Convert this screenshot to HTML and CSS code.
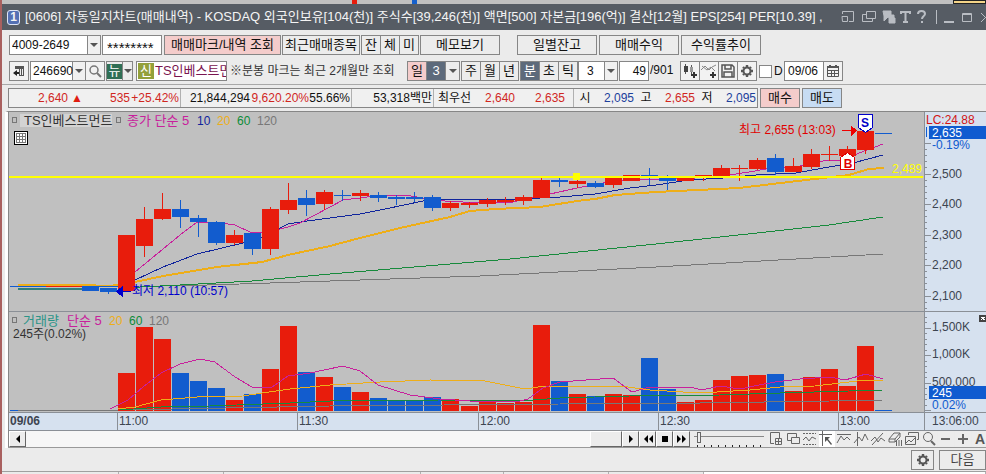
FILE: index.html
```html
<!DOCTYPE html>
<html lang="ko">

<head>
    <meta charset="UTF-8">
    <meta name="viewport" content="width=device-width, initial-scale=1.0">
    <link rel="stylesheet" href="styles.css">
    <title>[0606] 자동일지차트</title>
</head>

<body>
    <div class="desktop-strip"><i class="mark red"></i><i class="mark blue"></i><i class="mark tab"></i></div>

    <main class="window">
        <header class="titlebar">
            <span class="badge">1</span>
            <h1>[0606] 자동일지차트(매매내역) - KOSDAQ 외국인보유[104(천)] 주식수[39,246(천)] 액면[500] 자본금[196(억)] 결산[12월] EPS[254] PER[10.39] ,</h1>
            <svg class="title-icons" width="146" height="18" viewBox="0 0 146 18" fill="none" stroke="#b9bdc3" stroke-width="1">
                <path d="M2.5 6V3.500h11v10H9M2 8.500h5.500v5H2.500z" />
                <path d="M26.500 3.500h9v7h-9zM26 6.500h-3.500v7h10v-3" />
                <path d="M43 3h8v8l-3-2-4 4v-5zM49 10h6v5h-6zM50 10V7h4v3" fill="#b9bdc3" />
                <path d="M61 6V4h9v2M65.500 4v10M63 14h5" stroke-width="2" />
                <path d="M78 6c0-4 7-4 7 0 0 2-3 2-3 5M82 13v2" stroke-width="2" />
                <path d="M96.500 2v14" />
                <path d="M104 14h10" stroke-width="2" />
                <path d="M122.500 5.500h9v8h-9zM122 6.500h10" />
                <path d="M141 5l9 9M150 5l-9 9" />
            </svg>
        </header>

        <section class="toolbar">
            <div class="row">
                <span class="combo account"><select aria-label="계좌번호"><option>4009-2649</option></select></span>
                <input class="box password" type="text" value="********" aria-label="비밀번호">
                <button class="pink w-query">매매마크/내역 조회</button>
                <button class="w-recent">최근매매종목</button>
                <span class="group"><button>잔</button><button>체</button><button>미</button></span>
                <button class="w-tab">메모보기</button>
                <button class="w-tab apart">일별잔고</button>
                <button class="w-tab">매매수익</button>
                <button class="w-tab">수익률추이</button>
            </div>

            <div class="row">
                <button class="icon" aria-label="목록"><svg width="14" height="14" viewBox="0 0 14 14"><path d="M3 2h9v10H7V5H3z" fill="#555" /><path d="M8 5h1v6H8zM10 5h1v6h-1z" fill="#eee" /><path d="M1 9l4-3v2h2v2H5v2z" fill="#222" /></svg></button>
                <span class="group">
                    <span class="combo code"><select aria-label="종목코드"><option>246690</option></select></span><button class="icon" aria-label="검색"><svg width="14" height="14" viewBox="0 0 14 14" fill="none" stroke="#777"><circle cx="6" cy="6" r="4" stroke-width="1.5" /><path d="M9 9l4 4" stroke-width="2" /></svg></button>
                </span>
                <span class="group news"><button><b>뉴</b></button><button class="drop" aria-label="뉴스 메뉴"></button></span>
                <span class="box stock"><b>신</b><span>TS인베스트먼트</span></span>
                <span class="note">※분봉 마크는 최근 2개월만 조회</span>
                <span class="group"><button class="pink">일</button><button class="dark">3</button><button class="drop" aria-label="일 간격"></button></span>
                <span class="group"><button>주</button><button>월</button><button>년</button></span>
                <span class="group"><button class="dark">분</button><button>초</button><button>틱</button><span class="combo tick"><select aria-label="간격"><option>3</option></select></span></span>
                <label class="count"><input class="box" type="text" value="49">/901</label>
                <span class="group">
                    <button class="icon" aria-label="봉 추가"><svg width="16" height="16" viewBox="0 0 16 16"><path d="M3.500 1v10M9.500 2v9" stroke="#555" /><path d="M2 3h4v6H2z" fill="#444" /><path d="M8 4h3v5H8z" fill="#999" /><path d="M9 12h6M12 9v6" stroke="#333" stroke-width="2" /></svg></button><button class="icon" aria-label="지표 추가"><svg width="16" height="16" viewBox="0 0 16 16" fill="none"><path d="M0 7l4-4 4 4 3-3 4-2M1 3l5 4 4-3 4 4" stroke="#888" /><path d="M9 12h6M12 9v6" stroke="#333" stroke-width="2" /></svg></button><button class="icon" aria-label="저장"><svg width="16" height="16" viewBox="0 0 16 16" fill="none" stroke="#555" stroke-width="1.5"><path d="M2 2h10l2 2v10H2zM5 2v4h6V2M4 14V9h8v5" /></svg></button><button class="icon" aria-label="설정"><svg width="14" height="14" viewBox="0 0 14 14" fill="none" stroke="#555"><circle cx="7" cy="7" r="3.500" stroke-width="2" /><path d="M7 1v2M7 11v2M1 7h2M11 7h2M3 3l1 1M10 10l1 1M11 3l-1 1M3 11l1-1" stroke-width="2.4" /></svg></button>
                </span>
                <label class="check"><input type="checkbox">D</label>
                <span class="group"><input class="box date" type="text" value="09/06" aria-label="날짜"><button class="icon" aria-label="달력"><svg width="14" height="14" viewBox="0 0 14 14" fill="none" stroke="#555"><path d="M1.500 3.500h11v9h-11zM1 6.500h12M1 9.500h12M5.500 6v6M8.500 6v6" /><path d="M1 3h12M4 1v3M10 1v3" stroke-width="2" /></svg></button></span>
            </div>
        </section>

        <section class="quote">
            <table>
                <tr>
                    <td class="c-price up">2,640</td>
                    <td class="c-arrow up">▲</td>
                    <td class="c-diff up">535</td>
                    <td class="c-rate up line">+25.42%</td>
                    <td class="c-volume">21,844,294</td>
                    <td class="c-ratio up">9,620.20%</td>
                    <td class="c-turn line">55.66%</td>
                    <td class="c-amount line">53,318백만</td>
                    <th class="c-best">최우선</th>
                    <td class="c-ask up">2,640</td>
                    <td class="c-bid up line">2,635</td>
                    <th>시</th>
                    <td class="c-ohl down">2,095</td>
                    <th>고</th>
                    <td class="c-ohl up">2,655</td>
                    <th>저</th>
                    <td class="c-ohl down">2,095</td>
                </tr>
            </table>
            <button class="pink">매수</button>
            <button class="sky">매도</button>
        </section>

        <section class="chart">
            <svg id="chart" viewBox="9 112 977 319">
                <rect class="plot" x="9" y="112" width="915" height="300" />
                <rect class="axis" x="924" y="112" width="62" height="319" />
                <rect class="axis" x="9" y="412" width="977" height="19" />
                <g id="volume"></g>
                <g id="volume-lines"></g>
                <g id="price-lines"></g>
                <g id="candles"></g>
                <path class="avg-price" d="M9 177H923" />
                <rect x="573" y="173" width="7" height="7" fill="#ff0" />
                <g id="scale"></g>
                <path class="rule" d="M9 311.500H986M9 412.500H986M924.500 112V430M117.500 412V430M297.500 412V430M478.500 412V430M658.500 412V430M838.500 412V430M9 430.500H986" />

                <g class="legend">
                    <rect class="dot" x="12.500" y="117.500" width="4" height="5" />
                    <rect x="20" y="114" width="92" height="13" fill="#d3d3d3" />
                    <text x="24" y="125" fill="#333">TS인베스트먼트</text>
                    <rect class="dot" x="116.500" y="117.500" width="4" height="5" />
                    <text x="127" y="125" fill="#c8209c">종가 단순 5</text>
                    <rect class="dot" x="12.500" y="317.500" width="4" height="5" />
                    <text x="23" y="325" fill="#2a9488">거래량</text>
                    <text x="67" y="325" fill="#c8209c">단순 5</text>
                </g>
                <g class="label">
                    <text x="197" y="125" fill="#10249c">10</text>
                    <text x="217" y="125" fill="#eeae18">20</text>
                    <text x="237" y="125" fill="#0c8c38">60</text>
                    <text x="257" y="125" fill="#777">120</text>
                    <text x="109" y="325" fill="#eeae18">20</text>
                    <text x="129" y="325" fill="#0c8c38">60</text>
                    <text x="149" y="325" fill="#777">120</text>
                    <text x="13" y="338" fill="#333">245주(0.02%)</text>
                </g>
                <rect x="14.500" y="131.500" width="13" height="13" fill="#fff" stroke="#000" />
                <path d="M16.500 133.500h9v9h-9zM19.500 133v10M22.500 133v10M16 136.500h10M16 139.500h10" fill="none" stroke="#777" />

                <g class="label">
                    <path d="M116 291.500l7-6v12z" fill="#00c" />
                    <path d="M122 291.500h9" stroke="#00c" />
                    <text x="132" y="295" fill="#00c">최저 2,110 (10:57)</text>
                    <text x="739" y="134" fill="#e00000">최고 2,655 (13:03)</text>
                    <path d="M842 130.500h10" stroke="#e00" />
                    <path d="M857 130.500l-6-5v11z" fill="#e00" />
                    <path d="M858.500 114.500h14v13l-7 5-7-5z" fill="#fff" stroke="#0000c8" />
                    <text class="flag" x="865" y="127" fill="#0000c8">S</text>
                    <path d="M840.500 169.500h14v-12l-7-5-7 5z" fill="#fff" stroke="#e00000" />
                    <text class="flag" x="848" y="168" fill="#e00000">B</text>
                    <text x="892" y="173" fill="#ff0">2,489</text>
                </g>

                <g class="label num">
                    <text x="926" y="124" fill="#d21414">LC:24.88</text>
                    <path d="M926.500 127v10" stroke="#0f5cd0" />
                    <rect x="929" y="126" width="57" height="13" fill="#0f5bd0" />
                    <text x="932" y="137" fill="#fff">2,635</text>
                    <text x="932" y="149" fill="#0f5bd0">-0.19%</text>
                    <text x="932" y="178">2,500</text>
                    <text x="932" y="208">2,400</text>
                    <text x="932" y="239">2,300</text>
                    <text x="932" y="269">2,200</text>
                    <text x="932" y="300">2,100</text>
                    <text x="932" y="331">1,500K</text>
                    <text x="932" y="358">1,000K</text>
                    <text x="932" y="386">500,000</text>
                    <rect x="929" y="386" width="57" height="13" fill="#0f5bd0" />
                    <text x="932" y="397" fill="#fff">245</text>
                    <text x="932" y="409" fill="#0f5bd0">0.02%</text>
                    <text x="10" y="425" class="day">09/06</text>
                    <text x="119" y="425">11:00</text>
                    <text x="299" y="425">11:30</text>
                    <text x="480" y="425">12:00</text>
                    <text x="660" y="425">12:30</text>
                    <text x="840" y="425">13:00</text>
                    <text x="932" y="425">13:06:00</text>
                </g>
                <rect x="979" y="315" width="8" height="7" fill="#444" />
                <path d="M981 317l4 3M985 317l-4 3" stroke="#fff" />
            </svg>

            <div class="scroll">
                <button aria-label="왼쪽"><svg width="8" height="8" viewBox="0 0 8 8"><path d="M6 0v8L2 4z" /></svg></button>
                <div class="track"><button class="thumb" aria-label="스크롤"></button></div>
                <button aria-label="오른쪽"><svg width="8" height="8" viewBox="0 0 8 8"><path d="M2 0v8l4-4z" /></svg></button>
                <button aria-label="처음"><svg width="10" height="8" viewBox="0 0 10 8"><path d="M5 0v8L1 4zM10 0v8L6 4z" /></svg></button>
                <button aria-label="정지"><svg width="8" height="8" viewBox="0 0 8 8"><path d="M1 1h6v6H1z" /></svg></button>
                <button aria-label="끝"><svg width="10" height="8" viewBox="0 0 10 8"><path d="M0 0v8l4-4zM5 0v8l4-4z" /></svg></button>
                <div class="speed"><input type="range" min="0" max="100" value="4" aria-label="속도"></div>
                <div class="tools">
                    <button aria-label="창 추가"><svg viewBox="0 0 16 16"><path d="M6 12.500H2.500v-11h9V7M7.500 7.500h6v6h-6zM10.500 7v7M7 10.500h7" /></svg></button>
                    <button aria-label="창 겹치기"><svg viewBox="0 0 16 16"><path d="M11.500 6V2.500h-9v7H6M6.500 6.500h8v6h-8z" /></svg></button>
                    <button aria-label="영역"><svg viewBox="0 0 16 16"><path d="M1 2.500h13M1 13.500h13" stroke-dasharray="2 1" /><path d="M1 9l3-3 3 4 3-4 4 2" /></svg></button>
                    <button class="on" aria-label="십자선"><svg viewBox="0 0 16 16"><path d="M0 3.500h13M3.500 0v15" /><path d="M6 6h5l-2 2 4 5-1 1-4-5-2 2z" fill="#555" stroke="none" /></svg></button>
                    <button aria-label="수평선"><svg viewBox="0 0 16 16"><path d="M1 3.500h14M1 12l4-7 3 4 3-3 3 3" /></svg></button>
                    <button aria-label="수직선"><svg viewBox="0 0 16 16"><path d="M4.500 1v14M1 12l5-6 3 4 3-7 3 6" /></svg></button>
                    <button aria-label="추세선"><svg viewBox="0 0 16 16"><path d="M2 14L13 2M1 10l4-4 3 5 3-4 4 3" /></svg></button>
                    <button aria-label="지우개"><svg viewBox="0 0 16 16"><path d="M2 8l5-6h6l-5 6zM2 8v3h6V8M8 11l5-5V2M9.500 9v6M12 9v6M14.500 9v6" /></svg></button>
                    <button aria-label="차트 복사"><svg viewBox="0 0 16 16"><path d="M4.500 4V1.500h10v7H13M1.500 5.500h10v8h-10zM2 12l3-3 2 2 4-4" /></svg></button>
                    <button aria-label="확대경"><svg viewBox="0 0 16 16"><circle cx="7" cy="6" r="4.500" /><path d="M10 10l4 4" stroke-width="2" /></svg></button>
                    <button aria-label="축소"><svg viewBox="0 0 16 16"><path d="M3 8h9" stroke-width="2" /></svg></button>
                    <button aria-label="확대"><svg viewBox="0 0 16 16"><path d="M3 8h10M8 3v10" stroke-width="2" /></svg></button>
                    <button aria-label="자동">A</button>
                </div>
            </div>
        </section>

        <footer class="footer">
            <button class="gear" aria-label="환경설정"><svg width="14" height="14" viewBox="0 0 14 14" fill="none" stroke="#555"><circle cx="7" cy="7" r="3.500" stroke-width="2" /><path d="M7 1v2M7 11v2M1 7h2M11 7h2M3 3l1 1M10 10l1 1M11 3l-1 1M3 11l1-1" stroke-width="2.4" /></svg></button>
            <button class="next">다음</button>
        </footer>
        <div class="tabs"><i></i><i></i><i></i><i></i><i></i><i></i><i class="blank"></i></div>
    </main>

    <script src="script.js"></script>
</body>

</html>
```
FILE: styles.css
```css
* {
    box-sizing: border-box;
}

body {
    margin: 0;
    height: 100vh;
    overflow: hidden;
    display: flex;
    flex-direction: column;
    background-color: #ebebeb;
    border-left: 2px solid #a9605f;
    font-family: "Liberation Sans", "Noto Sans CJK KR", sans-serif;
    font-size: 13px;
    line-height: 18px;
    color: #111;
}

button,
input,
select {
    font: inherit;
    color: inherit;
    margin: 0;
    padding: 0;
    border: 1px solid #868686;
    border-radius: 0;
    background-color: #ececec;
    height: 20px;
    line-height: 18px;
    white-space: nowrap;
}

button {
    display: inline-flex;
    align-items: center;
    justify-content: center;
    flex: none;
}

.desktop-strip {
    flex: none;
    display: flex;
    height: 4px;
    background-color: #c0c0c0;
}

.mark {
    width: 5px;
}

.mark.red {
    margin-left: 350px;
    background-color: #e81c0c;
}

.mark.blue {
    margin-left: 55px;
    background-color: #1560cc;
}

.mark.tab {
    width: 33px;
    margin-left: auto;
    border: 1px solid #222;
    background-color: #f4d488;
}

.window {
    flex: 1;
    display: flex;
    flex-direction: column;
    min-height: 0;
}

/* title bar */
.titlebar {
    flex: none;
    display: flex;
    align-items: center;
    height: 26px;
    padding-left: 5px;
    background-color: #565c64;
    color: #f4f4f4;
}

.badge {
    flex: none;
    width: 13px;
    height: 15px;
    line-height: 13px;
    border: 1px solid #dfe5f5;
    border-radius: 3px;
    background-color: #5470b4;
    font-size: 12px;
    font-weight: bold;
    text-align: center;
}

.titlebar h1 {
    flex: 1;
    margin: 0 0 0 5px;
    font-size: 13px;
    font-weight: normal;
    white-space: nowrap;
}

.title-icons {
    flex: none;
}

/* toolbar */
.toolbar {
    flex: none;
    display: flex;
    flex-direction: column;
    gap: 6px;
    padding: 5px 0 3px 7px;
    border-bottom: 1px solid #a8a8a8;
}

.row {
    display: flex;
    align-items: center;
    gap: 1px;
}

.group {
    flex: none;
    display: flex;
}

.group > * + * {
    border-left: 0;
}

.group button {
    width: 19px;
}

.group button:first-child {
    width: 20px;
}

.group .drop {
    width: 14px;
}

.drop::after,
.combo::after {
    content: "";
    border: 4px solid transparent;
    border-top-color: #555;
    border-bottom: 0;
}

.icon {
    width: 20px;
    background-color: #f2f2f2;
}

.pink {
    background-color: #f4cccb;
}

.sky {
    background-color: #c7dcf3;
}

.dark {
    background-color: #5d6a7b;
    color: #fff;
}

.box {
    background-color: #fff;
    border: 1px solid #868686;
    font-size: 12px;
}

.combo {
    flex: none;
    display: flex;
    align-items: center;
    height: 20px;
    padding-right: 2px;
    border: 1px solid #868686;
    background: linear-gradient(to left, #f0f0f0 12px, #868686 12px, #868686 13px, #fff 13px);
}

.combo select {
    flex: 1;
    min-width: 0;
    height: 18px;
    padding-left: 2px;
    border: 0;
    background: none;
    appearance: none;
    font-size: 12px;
}

.account {
    width: 92px;
}

.password {
    width: 60px;
    margin-right: 1px;
    padding: 4px 0 0 4px;
    font-size: 15px;
}

.w-query {
    width: 117px;
}

.w-recent {
    width: 78px;
}

.w-tab {
    width: 80px;
    margin-right: 1px;
}

.w-tab.apart {
    margin-left: 15px;
}

.code {
    width: 56px;
}

.tick {
    width: 40px;
}

.tick select {
    padding-left: 8px;
}

.news {
    margin-right: 2px;
}

.news button:first-child {
    width: 17px;
}

.news .drop {
    width: 10px;
}

.news b {
    width: 15px;
    height: 15px;
    line-height: 14px;
    background-color: #2f6f55;
    color: #fff;
    font-weight: normal;
}

.stock {
    flex: none;
    display: flex;
    width: 91px;
    height: 20px;
    overflow: hidden;
    white-space: nowrap;
    font-size: 13px;
    color: #7a1450;
}

.stock b {
    flex: none;
    width: 16px;
    margin: 1px;
    line-height: 15px;
    background-color: #93a03a;
    color: #fff;
    font-weight: normal;
    text-align: center;
}

.note {
    flex: none;
    width: 178px;
    padding-left: 2px;
    font-size: 12px;
    color: #333;
    white-space: nowrap;
}

.count {
    flex: none;
    display: flex;
    width: 60px;
    white-space: nowrap;
    font-size: 12px;
}

.count input {
    width: 30px;
    margin-right: 1px;
    padding-right: 2px;
    text-align: right;
}

.check {
    display: flex;
    align-items: center;
    gap: 2px;
    width: 24px;
    margin-left: 1px;
    font-size: 12px;
}

.check input {
    appearance: none;
    width: 13px;
    height: 13px;
    background-color: #fff;
}

.date {
    width: 40px;
    padding-left: 3px;
}

/* quote line */
.quote {
    flex: none;
    display: flex;
    gap: 2px;
    padding: 3px 0 3px 6px;
}

.quote table {
    width: 750px;
    height: 20px;
    table-layout: fixed;
    border-collapse: separate;
    border-spacing: 0;
    border: 1px solid #868686;
    background-color: #f0f0f0;
}

.quote td,
.quote th {
    padding: 0;
    font-size: 12px;
    font-weight: normal;
    line-height: 17px;
    text-align: right;
    white-space: nowrap;
}

.quote th {
    width: 22px;
    text-align: center;
}

.quote .line {
    padding-right: 1px;
    border-right: 1px solid #b0b0b0;
}

.quote .up {
    color: #d0271f;
}

.quote .down {
    color: #1c409c;
}

.quote button {
    width: 40px;
}

.quote .c-price {
    width: 59px;
}

.quote .c-arrow {
    width: 15px;
    color: #e01c10;
}

.quote .c-diff {
    width: 47px;
}

.quote .c-rate {
    width: 51px;
}

.quote .c-volume {
    width: 69px;
}

.quote .c-ratio {
    width: 59px;
}

.quote .c-turn {
    width: 43px;
}

.quote .c-amount {
    width: 82px;
}

.quote .c-best {
    width: 41px;
}

.quote .c-ask {
    width: 40px;
}

.quote .c-bid {
    width: 59px;
    padding-right: 8px;
}

.quote .c-ohl {
    width: 39px;
    padding-right: 1px;
}

/* chart */
.chart {
    flex: none;
    margin-left: 3px;
    border-top: 1px solid #868686;
    border-left: 3px solid #fff;
    box-shadow: inset 1px 0 #868686;
}

#chart {
    display: block;
    width: 100%;
    padding-left: 1px;
    shape-rendering: crispEdges;
}

.legend {
    font-size: 13px;
}

.label {
    font-size: 12px;
}

.num {
    fill: #3c4450;
}

.day,
.flag {
    font-weight: bold;
}

.flag {
    text-anchor: middle;
}

.plot {
    fill: #c0c0c0;
}

.axis {
    fill: #d6e1ef;
}

.rule {
    stroke: #8a8f96;
}

.dot {
    fill: none;
    stroke: #777;
}

.avg-price {
    stroke: #ff0;
    stroke-width: 2;
}

/* scroll bar and drawing tools */
.scroll {
    display: flex;
    height: 17px;
    border-bottom: 1px solid #999;
    padding-left: 1px;
}

.scroll > button,
.thumb {
    width: 17px;
    height: 16px;
    border: 1px solid;
    border-color: #fff #666 #666 #fff;
    background-color: #ececec;
}

.track {
    flex: 1;
    display: flex;
    justify-content: flex-end;
    background-color: #f6f6f6;
}

.thumb {
    width: 32px;
}

.speed {
    width: 78px;
    padding: 0 4px;
}

.speed input {
    display: block;
    appearance: none;
    width: 100%;
    height: 16px;
    border: 0;
    background:
        linear-gradient(#888, #888) 0 5px / 100% 1px no-repeat,
        repeating-linear-gradient(to right, transparent 0 3px, #222 3px 4px, transparent 4px 7px) 0 14px / 100% 2px no-repeat;
}

.speed input::-webkit-slider-thumb {
    appearance: none;
    width: 4px;
    height: 11px;
    border: 1px solid #666;
    background-color: #eee;
    margin-bottom: 4px;
}

.tools {
    display: flex;
    gap: 1px;
    width: 218px;
    overflow: hidden;
}

.tools button {
    width: 16px;
    height: 16px;
    border: 0;
    font-size: 14px;
    font-weight: bold;
    color: #555;
}

.tools svg {
    width: 16px;
    height: 16px;
    fill: none;
    stroke: #666;
}

.tools .on {
    background-color: #fff;
}

/* bottom */
.footer {
    flex: none;
    display: flex;
    justify-content: flex-end;
    align-items: center;
    gap: 5px;
    height: 23px;
}

.gear {
    width: 23px;
}

.next {
    width: 47px;
    color: #444;
}

.tabs {
    flex: 1;
    display: grid;
    grid-template-columns: 117fr 105fr 197fr 83fr 105fr 95fr 282fr;
    border-top: 1px solid #a0a0a0;
}

.tabs i {
    border-right: 1px solid #b0b0b0;
}

.tabs .blank {
    background-color: #fff;
}
```
FILE: script.js
```javascript
const SVG = 'http://www.w3.org/2000/svg';
const RED = '#e81c0c';
const BLUE = '#125cce';
const BASE = 411;

// color, body top, body bottom, high, low, volume top
const bars = [
    ['r', 235, 291, 235, 291, 373], ['r', 219, 246, 207, 257, 327], ['r', 209, 219, 193, 220, 339],
    ['b', 209, 217, 200, 228, 373], ['b', 218, 222, 215, 237, 381], ['b', 222, 243, 221, 245, 388],
    ['r', 235, 243, 230, 245, 400], ['b', 233, 249, 233, 255, 394], ['r', 209, 249, 207, 255, 369],
    ['r', 200, 210, 183, 214, 326], ['b', 198, 205, 190, 216, 372], ['r', 192, 204, 190, 210, 377],
    ['b', 195, 196, 190, 201, 387], ['r', 193, 196, 190, 201, 392], ['b', 195, 198, 192, 202, 398],
    ['b', 197, 199, 195, 205, 400], ['b', 197, 199, 192, 202, 401], ['b', 197, 208, 195, 211, 397],
    ['r', 203, 208, 201, 211, 399], ['r', 203, 205, 202, 208, 406], ['r', 200, 204, 198, 207, 402],
    ['r', 200, 202, 197, 205, 403], ['r', 197, 201, 195, 205, 402], ['r', 180, 198, 178, 198, 325],
    ['b', 180, 182, 178, 187, 381], ['r', 181, 184, 178, 188, 394], ['b', 183, 187, 181, 188, 396],
    ['r', 178, 185, 178, 188, 394], ['r', 175, 181, 175, 181, 395], ['b', 175, 176, 168, 185, 358],
    ['b', 178, 181, 175, 190, 389], ['r', 178, 181, 178, 181, 402], ['r', 175, 176, 175, 181, 400],
    ['r', 168, 176, 165, 176, 380], ['r', 168, 169, 165, 181, 376], ['r', 160, 169, 158, 170, 375],
    ['b', 158, 172, 154, 175, 374], ['r', 166, 172, 158, 172, 391], ['r', 154, 167, 149, 169, 377],
    ['r', 154, 155, 146, 161, 369], ['r', 149, 156, 146, 156, 386], ['r', 131, 150, 129, 154, 346],
    ['b', 133, 134, 133, 134, 410]
];

function add(parent, name, attrs) {
    const el = document.createElementNS(SVG, name);
    for (const key in attrs) {
        el.setAttribute(key, attrs[key]);
    }
    document.getElementById(parent).appendChild(el);
}

function rect(parent, x, y, width, height, fill) {
    add(parent, 'rect', { x, y, width, height, fill });
}

function line(parent, points, stroke, width) {
    add(parent, 'polyline', { points, stroke, 'stroke-width': width || 1, fill: 'none' });
}

// flat bars before the jump
rect('candles', 10, 286, 108, 1, BLUE);
rect('candles', 18, 288, 64, 2, '#2f7f7a');
rect('candles', 46, 286, 36, 1, RED);
rect('candles', 82, 287, 17, 4, BLUE);
rect('candles', 100, 288, 17, 4, BLUE);
rect('candles', 108, 288, 1, 6, BLUE);
rect('volume', 10, 410, 8, 1, BLUE);
rect('volume', 18, 410, 100, 1, '#777');

bars.forEach(function (bar, i) {
    const x = 118 + i * 18 + (i > 18 ? 1 : 0);
    const color = bar[0] === 'r' ? RED : BLUE;
    rect('candles', x, bar[1], 17, bar[2] - bar[1], color);
    rect('candles', x + 8, bar[3], 1, bar[4] - bar[3], color);
    rect('volume', x, bar[5], 17, BASE - bar[5], color);
});

// moving averages
line('price-lines', '175,286 240,284 330,281 480,276 656,267 883,254', '#777');
line('price-lines', '120,288 180,285 252,281 330,274 510,259 656,244 766,232 829,225 883,217', '#178a3c');
line('price-lines', '18,285 82,285 110,286 135,282 163,276 217,267 262,262 288,255 330,246 360,238 400,228 450,217 470,211 495,209 540,207 577,201 595,199 615,195 656,192 739,188 789,182 823,178 849,175 869,169 884,168', '#eeae18', 2);
line('price-lines', '135,280 163,267 197,254 243,243 262,237 280,228 288,224 307,221 330,218 360,214 385,209 423,201 440,199 520,199 560,197 595,194 630,188 656,185 689,180 723,178 756,175 796,173 823,168 853,163 883,155', '#10249c');
line('price-lines', '135,272 163,249 180,235 197,222 213,222 235,225 252,233 262,232 280,229 288,227 300,223 330,207 343,200 360,198 380,195 405,195 423,198 445,201 463,202 513,202 530,198 550,194 577,188 603,183 630,180 660,179 696,178 723,176 749,172 766,169 796,167 823,161 843,160 859,153 883,144', '#c8209c');

line('volume-lines', '120,410 330,406 560,404 700,403 830,401 883,400', '#777');
line('volume-lines', '120,410 161,407 210,406 290,403 330,401 440,400 520,401 560,398 630,396 720,395 780,393 883,390', '#178a3c');
line('volume-lines', '118,409 135,407 161,400 197,397 243,396 262,393 290,389 330,385 380,382 430,380 485,381 525,389 545,386 620,386 650,390 700,393 750,390 780,387 815,386 866,380 883,381', '#eeae18');
line('volume-lines', '110,409 128,400 143,387 161,373 180,364 200,359 215,362 235,377 252,387 272,387 288,376 310,373 343,366 360,371 378,385 410,395 440,399 470,401 520,401 528,399 543,388 560,382 613,378 632,392 650,387 690,387 702,390 720,386 740,389 759,385 775,382 800,379 830,377 845,380 866,374 883,379', '#c8209c');

// axis ticks
for (let i = 0; i < 28; i++) {
    const y = 143 + i * 6.1;
    rect('scale', 925, Math.round(y), i % 5 === 0 ? 6 : 2, 1, '#8a8f96');
}
for (let i = 0; i < 18; i++) {
    rect('scale', 925, Math.round(410 - i * 5.5), i % 5 === 0 ? 6 : 2, 1, '#8a8f96');
}
```
